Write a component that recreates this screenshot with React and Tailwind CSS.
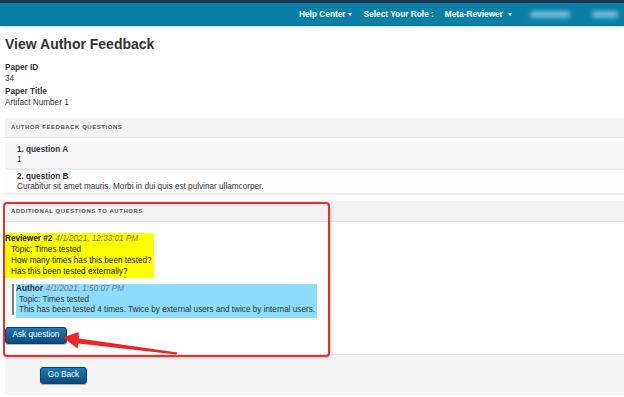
function Caret({ className = "" }) {
  return (
    <span
      className={
        "inline-block w-0 h-0 border-x-[2.5px] border-x-transparent border-t-[3px] border-t-white " +
        className
      }
    />
  );
}

function Btn({ children, className = "" }) {
  return (
    <div
      className={
        "flex items-center justify-center h-[17px] rounded-[3px] border border-[#083f6b] bg-linear-to-b from-[#1f78b4] to-[#0a4a7e] text-white text-[8.2px] shadow-[0_1px_1px_rgba(0,0,0,0.3)] " +
        className
      }
    >
      {children}
    </div>
  );
}

export default function App() {
  return (
    <div className="relative w-[624px] h-[397px] overflow-hidden bg-white text-[#333] font-['Liberation_Sans',Arial,sans-serif]">
      {/* top bars */}
      <div className="h-[3px] bg-[#1f384d]" />
      <div className="relative h-[23px] bg-[#0a80a8] border-b border-[#076f93] shadow-[0_1px_3px_rgba(0,0,0,0.15)] flex items-center text-white font-bold text-[8.3px]">
        <div className="ml-[299px] flex items-center">
          <span>Help Center</span>
          <Caret className="ml-[2px]" />
        </div>
        <span className="ml-[12px]">Select Your Role :</span>
        <div className="ml-[11px] flex items-center">
          <span>Meta-Reviewer</span>
          <Caret className="ml-[5px]" />
        </div>
        <div className="ml-[18px] h-[7px] w-[40px] rounded bg-[#9ad3e8] blur-[2px] opacity-70" />
        <div className="ml-[22px] h-[7px] w-[26px] rounded bg-[#9ad3e8] blur-[2px] opacity-70" />
      </div>

      {/* content */}
      <div className="pl-[5px]">
        <h1 className="mt-[10px] text-[14px] leading-[16px] font-bold text-[#333]">
          View Author Feedback
        </h1>
        <div className="mt-[11px] text-[8.2px] leading-[10.5px]">
          <div className="font-bold">Paper ID</div>
          <div>34</div>
          <div className="mt-[3px] font-bold">Paper Title</div>
          <div>Artifact Number 1</div>
        </div>

        <div className="mt-[10px] h-[20px] bg-[#f3f3f3] border-b border-[#e5e5e5] flex items-center pl-[6px] text-[6px] font-bold tracking-[0.55px] text-[#555]">
          AUTHOR FEEDBACK QUESTIONS
        </div>

        <div className="mt-[4px] bg-[#f8f8f8] border-b-2 border-[#ececec] pl-[12px] pt-[3px] pb-[3px] text-[8.2px] leading-[10px]">
          <div className="font-bold">1. question A</div>
          <div>1</div>
        </div>
        <div className="bg-[#fdfdfd] border-b-2 border-[#eeeeee] pl-[12px] pt-[2px] pb-[1px] text-[8.2px] leading-[10px]">
          <div className="font-bold">2. question B</div>
          <div>Curabitur sit amet mauris. Morbi in dui quis est pulvinar ullamcorper.</div>
        </div>

        <div className="mt-[6px] h-[21px] bg-[#f3f3f3] border-b border-[#e5e5e5] flex items-center pl-[6px] text-[6px] font-bold tracking-[0.55px] text-[#555]">
          ADDITIONAL QUESTIONS TO AUTHORS
        </div>

        <div className="bg-white border-b border-[#e3e3e3] pt-[11px] pb-[10px] text-[8.2px]">
          <div className="-ml-[1px] w-[150px] bg-[#ffff00] leading-[11px] pb-[1px] text-[#222]">
            <div className="pl-[1px]">
              <span className="font-bold">Reviewer #2</span>
              <span className="ml-[3px] italic text-[#7d7d6a]">4/1/2021, 12:33:01 PM</span>
            </div>
            <div className="pl-[7px]">Topic: Times tested</div>
            <div className="pl-[7px]">How many times has this been tested?</div>
            <div className="pl-[7px]">Has this been tested externally?</div>
          </div>

          <div className="mt-[6px] ml-[7px] flex items-start">
            <div className="w-[2px] h-[31px] bg-[#7a7a7a]" />
            <div className="ml-[2px] w-[301px] bg-[#8ddcfb] leading-[10.5px] pb-[2.5px] text-[#333]">
              <div>
                <span className="font-bold">Author</span>
                <span className="ml-[3px] italic text-[#6a7f88]">4/1/2021, 1:50:07 PM</span>
              </div>
              <div className="pl-[3px]">Topic: Times tested</div>
              <div className="pl-[3px]">
                This has been tested 4 times. Twice by external users and twice by internal users.
              </div>
            </div>
          </div>

          <Btn className="mt-[9px] w-[62px]">Ask question</Btn>
        </div>

        <div className="h-[40px] bg-[#f4f4f4] pt-[12px] pl-[35px]">
          <Btn className="w-[47px]">Go Back</Btn>
        </div>
      </div>

      {/* annotations */}
      <div className="absolute left-[3px] top-[202px] w-[327px] h-[155px] border-2 border-[#ea2e2a] rounded-[4px] shadow-[1px_1px_2px_rgba(0,0,0,0.2)] pointer-events-none" />
      <svg
        className="absolute left-0 top-0 pointer-events-none"
        width="624"
        height="397"
        viewBox="0 0 624 397"
      >
        <polygon
          points="63,337.5 78.5,332 79,338.5 177.5,352.5 176.5,354.5 78.5,343.5 77.5,348.5"
          fill="#ec2424"
        />
      </svg>
    </div>
  );
}
